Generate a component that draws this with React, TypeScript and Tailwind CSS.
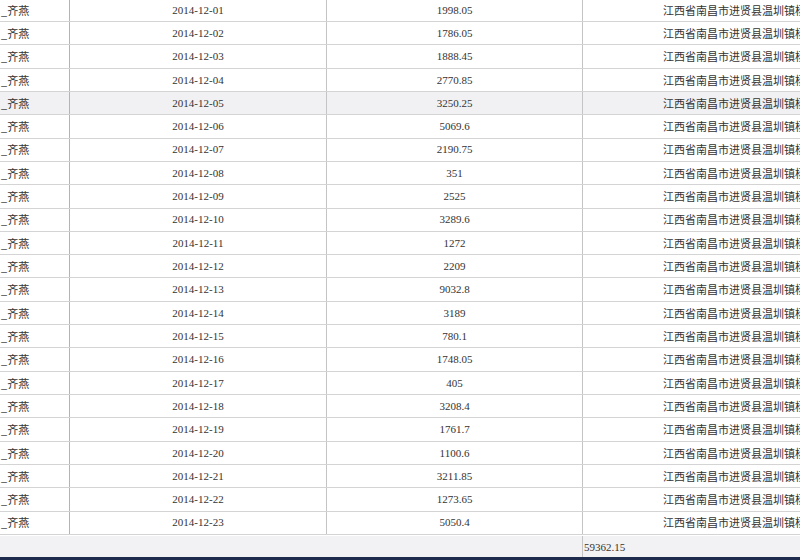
import React from "react";

const rows: [string, string][] = [
  ["2014-12-01", "1998.05"],
  ["2014-12-02", "1786.05"],
  ["2014-12-03", "1888.45"],
  ["2014-12-04", "2770.85"],
  ["2014-12-05", "3250.25"],
  ["2014-12-06", "5069.6"],
  ["2014-12-07", "2190.75"],
  ["2014-12-08", "351"],
  ["2014-12-09", "2525"],
  ["2014-12-10", "3289.6"],
  ["2014-12-11", "1272"],
  ["2014-12-12", "2209"],
  ["2014-12-13", "9032.8"],
  ["2014-12-14", "3189"],
  ["2014-12-15", "780.1"],
  ["2014-12-16", "1748.05"],
  ["2014-12-17", "405"],
  ["2014-12-18", "3208.4"],
  ["2014-12-19", "1761.7"],
  ["2014-12-20", "1100.6"],
  ["2014-12-21", "3211.85"],
  ["2014-12-22", "1273.65"],
  ["2014-12-23", "5050.4"],
];

const font = {
  fontFamily: '"Liberation Serif", "Noto Sans CJK SC", serif',
};
const cjk = {
  fontFamily: '"Noto Sans CJK SC", sans-serif',
};

export default function App() {
  return (
    <div className="w-[800px] h-[560px] overflow-hidden bg-white text-[#333] flex flex-col" style={font}>
      <div className="h-[536px] overflow-hidden">
        <div className="-mt-[1.3px] flex flex-col">
          {rows.map(([d, a], i) => (
            <div
              key={d}
              className={`h-[23.32px] flex border-b border-[#d4d4d4] text-[11px] ${i === 4 ? "bg-[#f1f1f3]" : "bg-white"}`}
            >
              <div className="w-[70px] shrink-0 border-r border-[#b4b4b4] flex items-center overflow-hidden whitespace-nowrap pl-[1px]" style={cjk}>
                _齐燕
              </div>
              <div className="w-[257px] shrink-0 border-r border-[#c4c4c4] flex items-center justify-center">
                {d}
              </div>
              <div className="w-[256px] shrink-0 border-r border-[#c4c4c4] flex items-center justify-center">
                {a}
              </div>
              <div className="flex-1 flex items-center overflow-hidden whitespace-nowrap pl-[80px]" style={cjk}>
                江西省南昌市进贤县温圳镇杨家村
              </div>
            </div>
          ))}
        </div>
      </div>
      <div className="h-[21px] bg-[#f2f2f4] flex text-[11px]">
        <div className="w-[583px] shrink-0 border-r border-[#c4c4c4]"></div>
        <div className="flex items-center pl-[1px] pt-[2px]">59362.15</div>
      </div>
      <div className="h-[3px] bg-[#1e2b4c]"></div>
    </div>
  );
}
